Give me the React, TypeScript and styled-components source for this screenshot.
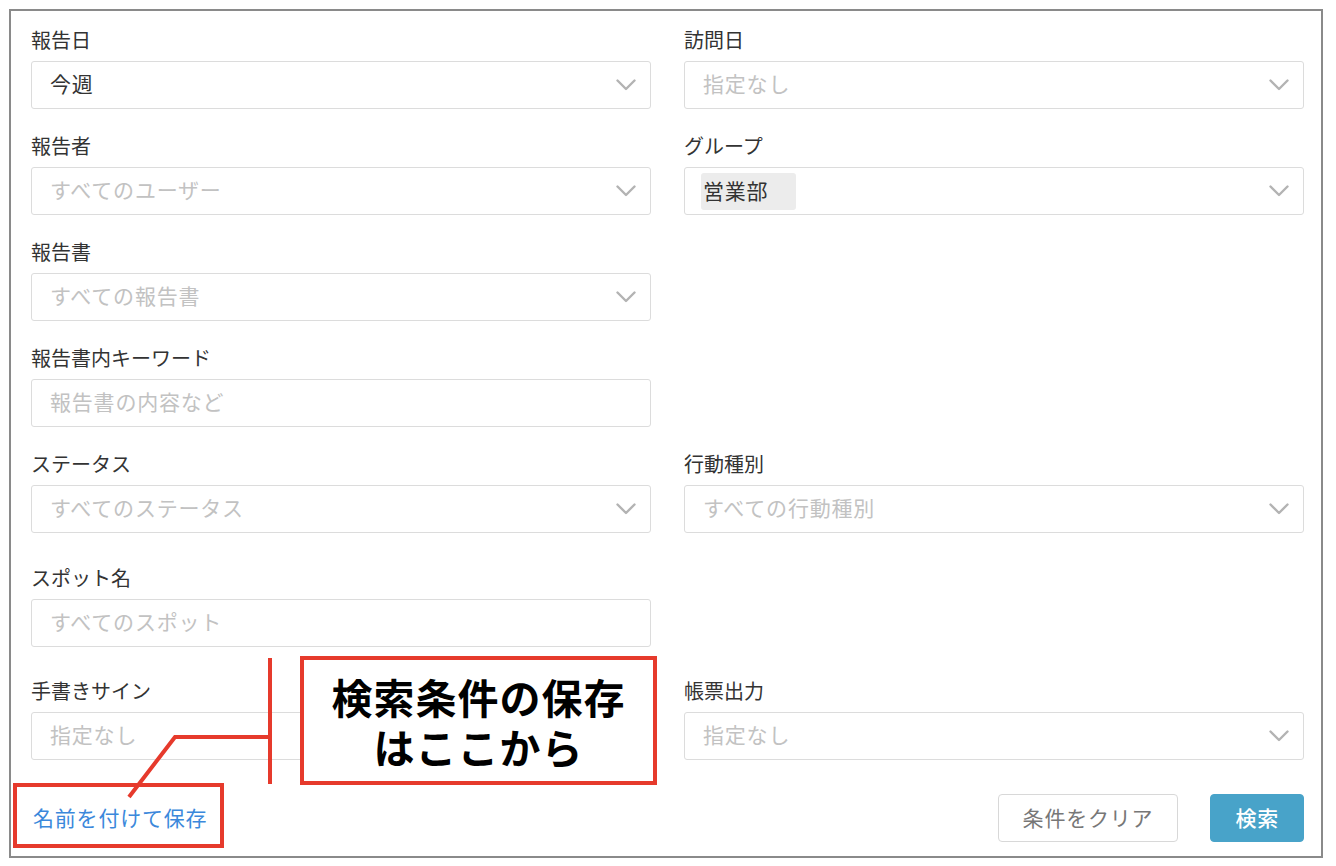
import React from 'react';
import styled, { createGlobalStyle } from 'styled-components';

const GlobalStyle = createGlobalStyle`
    html, body {
        margin: 0;
        padding: 0;
        background: #fff;
    }
    body {
        font-family: 'Noto Sans CJK JP', 'Noto Sans', sans-serif;
        color: #333;
    }
`;

const Frame = styled.div`
    position: relative;
    box-sizing: border-box;
    width: 1314px;
    height: 849px;
    margin: 9px;
    border: 2px solid #8a8a8a;
    padding: 15px 17px 14px 20px;
    display: flex;
    flex-direction: column;
`;

const Row = styled.div<{ $top: number }>`
    display: grid;
    grid-template-columns: 620px 620px;
    column-gap: 33px;
    margin-top: ${(p) => p.$top}px;
`;

const Field = styled.div`
    display: flex;
    flex-direction: column;
`;

const Label = styled.div`
    font-size: 20px;
    line-height: 28px;
    height: 28px;
    color: #333;
    margin-bottom: 7px;
`;

const Box = styled.div`
    box-sizing: border-box;
    height: 48px;
    border: 1px solid #dcdcdc;
    border-radius: 3px;
    background: #fff;
    display: flex;
    align-items: center;
    padding: 0 14px 0 18px;
    font-size: 21px;
    letter-spacing: 0.8px;
`;

const Value = styled.span<{ $placeholder?: boolean }>`
    flex: 1;
    padding-bottom: 4px;
    color: ${(p) => (p.$placeholder ? '#c2c2c2' : '#333')};
`;

const Chip = styled.span`
    background: #ececec;
    border-radius: 3px;
    padding: 3px 28px 6px 2px;
    margin-left: -2px;
    color: #333;
    line-height: 28px;
`;

const Spacer = styled.span`
    flex: 1;
`;

const Chevron = () => (
    <svg width='20' height='12' viewBox='0 0 20 12'>
        <path
            d='M1.5 1.5 L10 10 L18.5 1.5'
            fill='none'
            stroke='#b3b3b3'
            strokeWidth='2.4'
            strokeLinecap='round'
            strokeLinejoin='round'
        />
    </svg>
);

const Footer = styled.div`
    margin-top: 34px;
    display: flex;
    align-items: center;
    justify-content: space-between;
`;

const SaveLink = styled.a`
    margin-left: 2px;
    padding-bottom: 3px;
    font-size: 21px;
    letter-spacing: 0.8px;
    color: #3b88db;
    text-decoration: none;
    cursor: pointer;
`;

const Buttons = styled.div`
    display: flex;
    gap: 32px;
`;

const Button = styled.button<{ $primary?: boolean }>`
    box-sizing: border-box;
    height: 48px;
    padding: 0 24px 3px;
    font-family: inherit;
    font-size: 21px;
    letter-spacing: 0.8px;
    border-radius: 4px;
    border: 1px solid ${(p) => (p.$primary ? '#48a3c9' : '#d8d8d8')};
    background: ${(p) => (p.$primary ? '#48a3c9' : '#fff')};
    color: ${(p) => (p.$primary ? '#fff' : '#777')};
    font-weight: ${(p) => (p.$primary ? 500 : 400)};
    cursor: pointer;
`;

const Highlight = styled.div`
    position: absolute;
    left: 2px;
    top: 772px;
    width: 211px;
    height: 65px;
    box-sizing: border-box;
    border: 4px solid #e63a2c;
    pointer-events: none;
`;

const Callout = styled.div`
    position: absolute;
    left: 289px;
    top: 645px;
    width: 357px;
    height: 129px;
    box-sizing: border-box;
    border: 4px solid #e63a2c;
    background: #fff;
    display: flex;
    flex-direction: column;
    align-items: center;
    justify-content: center;
    font-weight: 700;
    color: #000;
    letter-spacing: 1px;
`;

const CalloutLine = styled.div`
    font-size: 41px;
    line-height: 50px;
    height: 50px;
`;

const Leader = styled.svg`
    position: absolute;
    left: 0;
    top: 0;
    pointer-events: none;
`;

type FieldDef = {
    label: string;
    value?: string;
    placeholder?: string;
    chip?: string;
    select?: boolean;
};

const rows: { top: number; cols: (FieldDef | null)[] }[] = [
    {
        top: 0,
        cols: [
            { label: '報告日', value: '今週', select: true },
            { label: '訪問日', placeholder: '指定なし', select: true },
        ],
    },
    {
        top: 23,
        cols: [
            { label: '報告者', placeholder: 'すべてのユーザー', select: true },
            { label: 'グループ', chip: '営業部', select: true },
        ],
    },
    {
        top: 23,
        cols: [
            { label: '報告書', placeholder: 'すべての報告書', select: true },
            null,
        ],
    },
    {
        top: 23,
        cols: [
            { label: '報告書内キーワード', placeholder: '報告書の内容など' },
            null,
        ],
    },
    {
        top: 23,
        cols: [
            { label: 'ステータス', placeholder: 'すべてのステータス', select: true },
            { label: '行動種別', placeholder: 'すべての行動種別', select: true },
        ],
    },
    {
        top: 31,
        cols: [{ label: 'スポット名', placeholder: 'すべてのスポット' }, null],
    },
    {
        top: 30,
        cols: [
            { label: '手書きサイン', placeholder: '指定なし' },
            { label: '帳票出力', placeholder: '指定なし', select: true },
        ],
    },
];

const renderField = (f: FieldDef | null, i: number) => {
    if (!f) return <div key={i} />;
    return (
        <Field key={f.label}>
            <Label>{f.label}</Label>
            <Box>
                {f.chip ? (
                    <>
                        <Chip>{f.chip}</Chip>
                        <Spacer />
                    </>
                ) : (
                    <Value $placeholder={!f.value}>{f.value || f.placeholder}</Value>
                )}
                {f.select && <Chevron />}
            </Box>
        </Field>
    );
};

const App = () => {
    return (
        <>
            <GlobalStyle />
            <Frame>
                {rows.map((r, i) => (
                    <Row key={i} $top={r.top}>
                        {r.cols.map(renderField)}
                    </Row>
                ))}
                <Footer>
                    <SaveLink>名前を付けて保存</SaveLink>
                    <Buttons>
                        <Button>条件をクリア</Button>
                        <Button $primary>検索</Button>
                    </Buttons>
                </Footer>

                {/* annotation overlay */}
                <Leader width='300' height='800'>
                    <path
                        d='M259 647 L259 773'
                        stroke='#e63a2c'
                        strokeWidth='4'
                        fill='none'
                    />
                    <path
                        d='M259 726 L164 726 L118 786'
                        stroke='#e63a2c'
                        strokeWidth='4'
                        fill='none'
                    />
                </Leader>
                <Callout>
                    <CalloutLine>検索条件の保存</CalloutLine>
                    <CalloutLine>はここから</CalloutLine>
                </Callout>
                <Highlight />
            </Frame>
        </>
    );
};

export default App;
